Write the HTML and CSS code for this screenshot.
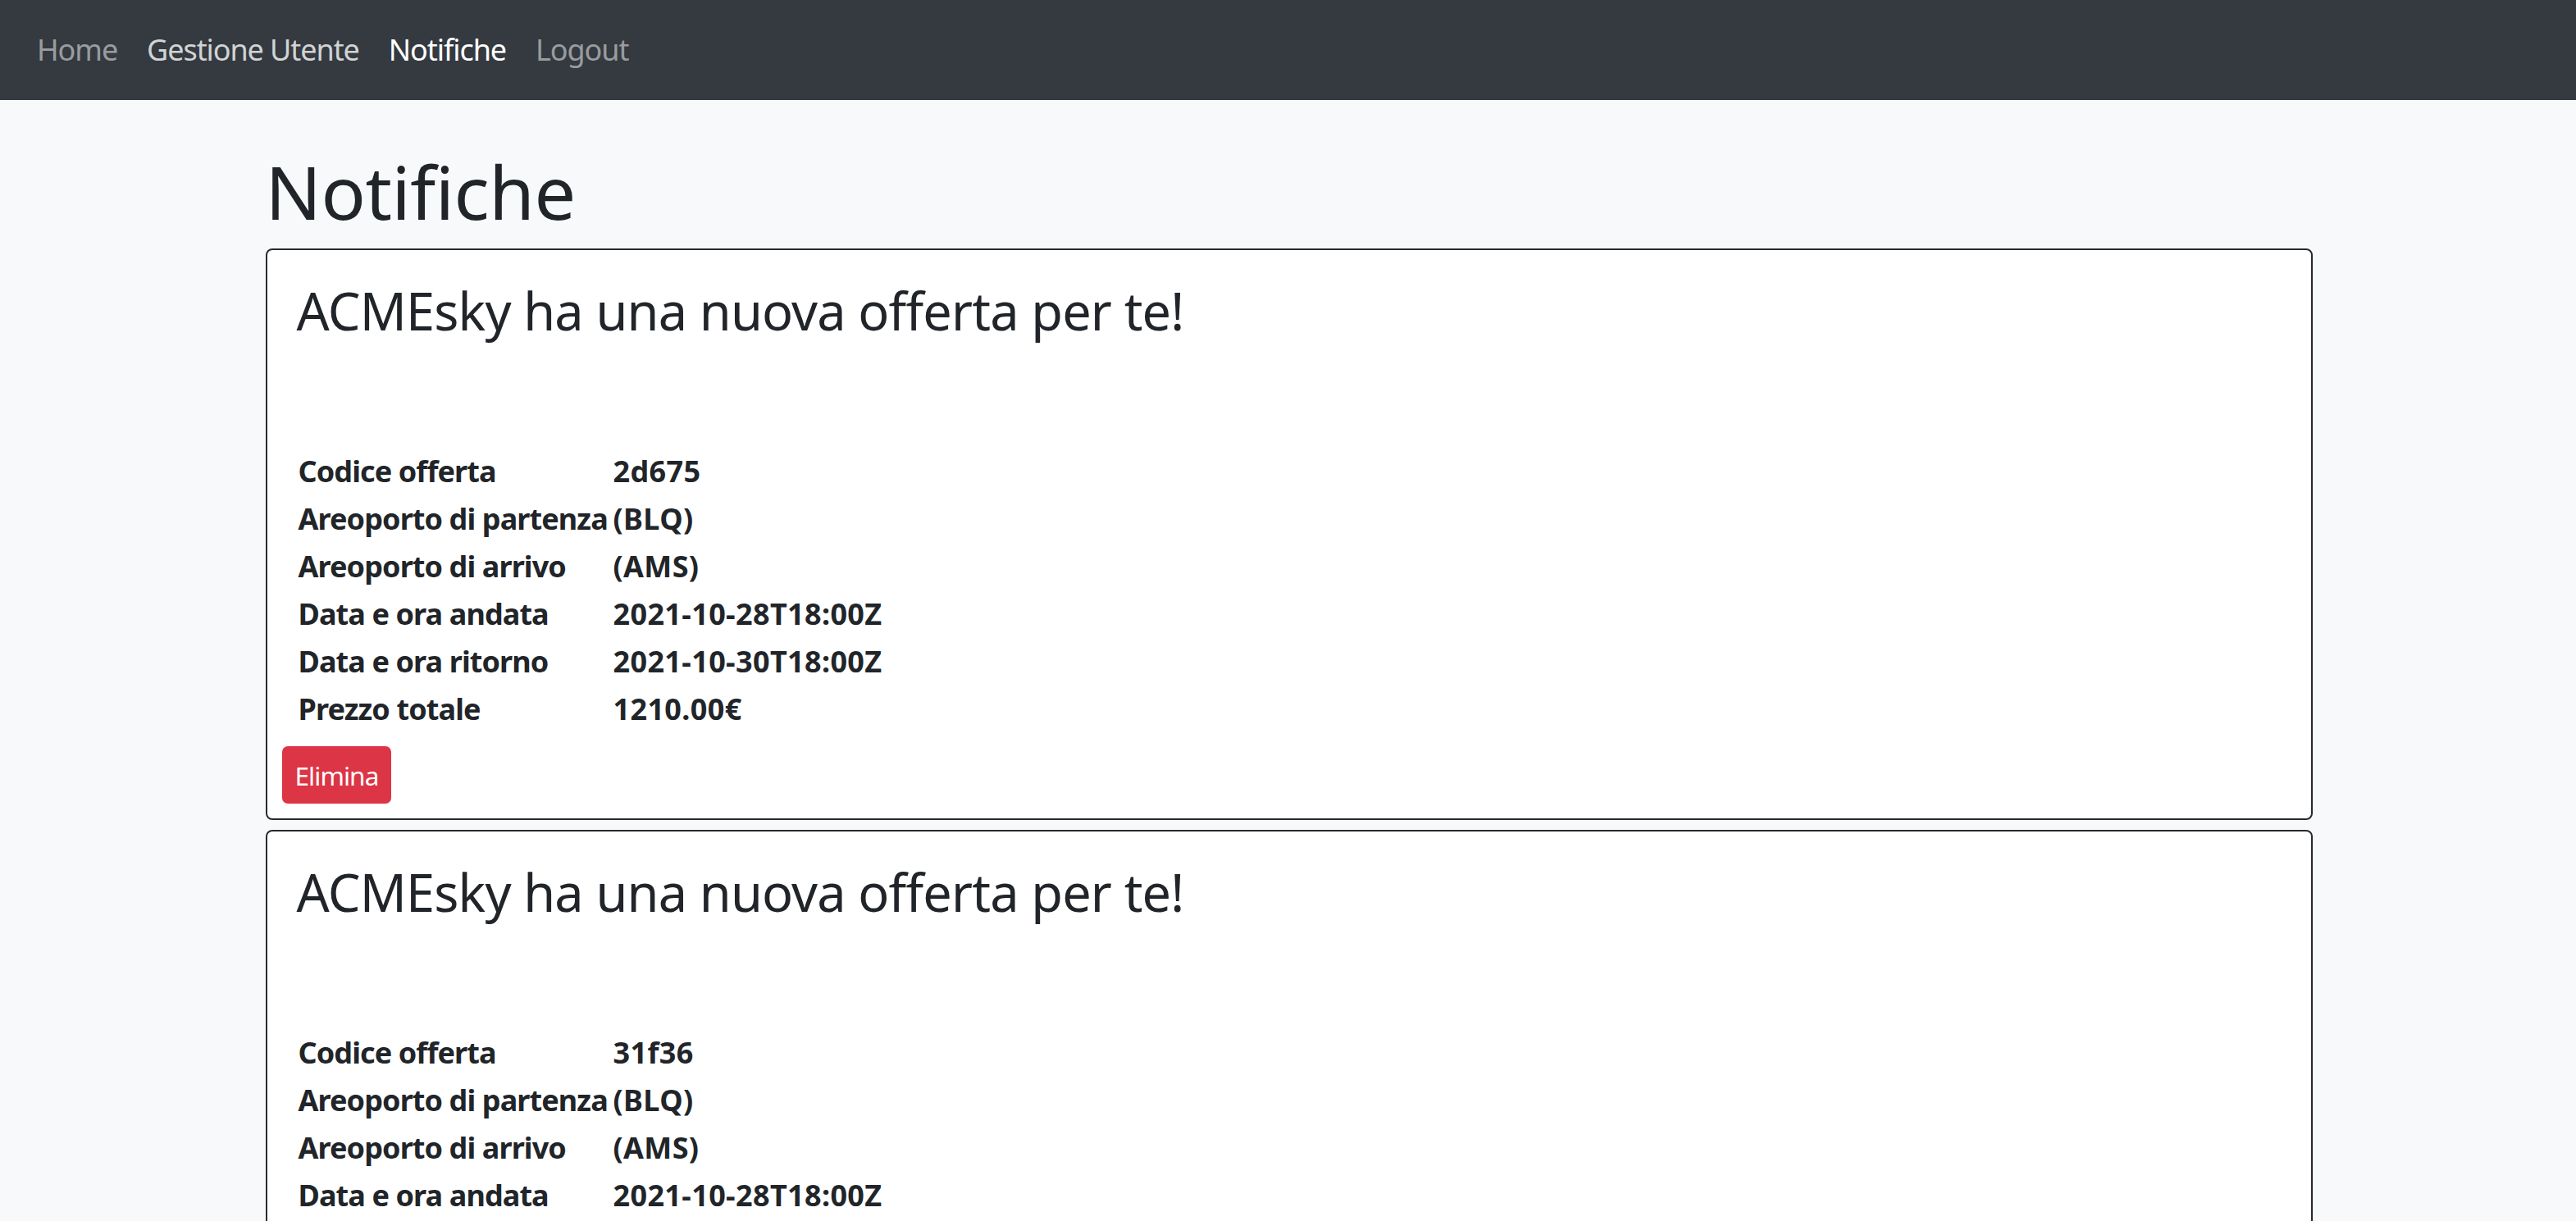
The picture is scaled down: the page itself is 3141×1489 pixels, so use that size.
FILE: index.html
```html
<!DOCTYPE html>
<html lang="it">
<head>
<meta charset="utf-8">
<title>Notifiche</title>
<link rel="stylesheet" href="styles.css">
</head>
<body>
<nav class="navbar">
  <a class="nav-link muted" href="#">Home</a>
  <a class="nav-link semi" href="#">Gestione Utente</a>
  <a class="nav-link active" href="#">Notifiche</a>
  <a class="nav-link muted" href="#">Logout</a>
</nav>
<main class="container">
  <h1 class="page-title">Notifiche</h1>

  <section class="card">
    <div class="card-body">
      <div class="offer">
        <h3 class="card-title">ACMEsky ha una nuova offerta per te!</h3>
        <table class="offer-table">
          <tr><th>Codice offerta</th><td>2d675</td></tr>
          <tr><th>Areoporto di partenza</th><td>(BLQ)</td></tr>
          <tr><th>Areoporto di arrivo</th><td>(AMS)</td></tr>
          <tr><th>Data e ora andata</th><td>2021-10-28T18:00Z</td></tr>
          <tr><th>Data e ora ritorno</th><td>2021-10-30T18:00Z</td></tr>
          <tr><th>Prezzo totale</th><td>1210.00€</td></tr>
        </table>
      </div>
      <button class="btn-danger" type="button">Elimina</button>
    </div>
  </section>

  <section class="card">
    <div class="card-body">
      <div class="offer">
        <h3 class="card-title">ACMEsky ha una nuova offerta per te!</h3>
        <table class="offer-table">
          <tr><th>Codice offerta</th><td>31f36</td></tr>
          <tr><th>Areoporto di partenza</th><td>(BLQ)</td></tr>
          <tr><th>Areoporto di arrivo</th><td>(AMS)</td></tr>
          <tr><th>Data e ora andata</th><td>2021-10-28T18:00Z</td></tr>
          <tr><th>Data e ora ritorno</th><td>2021-10-30T18:00Z</td></tr>
          <tr><th>Prezzo totale</th><td>1210.00€</td></tr>
        </table>
      </div>
      <button class="btn-danger" type="button">Elimina</button>
    </div>
  </section>
</main>
</body>
</html>
```
FILE: styles.css
```css
* { box-sizing: border-box; }

html, body {
  margin: 0;
  padding: 0;
}

body {
  background: #f8f9fa;
  color: #212529;
  font-family: "Noto Sans", "Open Sans", "Liberation Sans", sans-serif;
  font-size: 36px;
  line-height: 54px;
}

.navbar {
  display: flex;
  align-items: center;
  height: 122px;
  padding: 0 27px;
  background: #343a40;
}

.nav-link {
  display: block;
  padding: 0 18px;
  font-size: 36px;
  line-height: 54px;
  letter-spacing: -0.03em;
  text-decoration: none;
}

.nav-link.muted { color: rgba(255, 255, 255, 0.5); }
.nav-link.semi { color: rgba(255, 255, 255, 0.78); }
.nav-link.active { color: #ffffff; }

.container {
  width: 2498px;
  margin: 0 auto;
}

.page-title {
  margin: 57px 0 16px 2px;
  font-size: 90px;
  line-height: 108px;
  font-weight: 400;
  letter-spacing: -0.005em;
}

.card {
  margin-left: 2px;
  background: #ffffff;
  border: 2px solid #272a2e;
  border-radius: 8px;
  margin-bottom: 12px;
}

.card-body {
  padding: 18px;
}

.offer {
  padding: 18px 18px 16px;
}

.card-title {
  margin: 0 0 129px 0;
  font-size: 63px;
  line-height: 76px;
  font-weight: 400;
  letter-spacing: -0.013em;
}

.offer-table {
  border-collapse: collapse;
  font-weight: 700;
}

.offer-table th,
.offer-table td {
  padding: 2px;
  text-align: left;
  white-space: nowrap;
  vertical-align: top;
  font-weight: 700;
}

.offer-table th {
  width: 384px;
  min-width: 384px;
  max-width: 384px;
  letter-spacing: -0.025em;
}

.offer-table td {
  letter-spacing: 0.01em;
}

.btn-danger {
  display: inline-block;
  padding: 9.5px 14px;
  font-family: inherit;
  font-size: 31.5px;
  line-height: 47px;
  letter-spacing: -0.03em;
  color: #ffffff;
  background: #dc3545;
  border: 2px solid #dc3545;
  border-radius: 7px;
}
```
